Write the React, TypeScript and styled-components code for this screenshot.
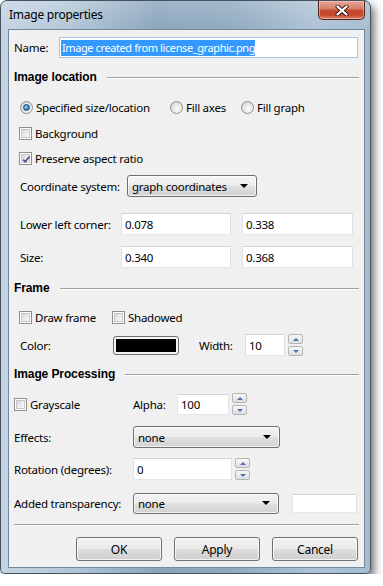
import React from "react";
import styled, { createGlobalStyle } from "styled-components";

const GlobalStyle = createGlobalStyle`
  html, body {
    margin: 0;
    padding: 0;
    background: #ffffff;
  }
  body {
    font-family: "Noto Sans", "Open Sans", sans-serif;
    font-size: 11.5px;
    letter-spacing: -0.25px;
    color: #000;
  }
`;

const Window = styled.div`
  width: 371px;
  height: 574px;
  box-sizing: border-box;
  border: 1px solid #45525e;
  border-radius: 7px 7px 5px 5px;
  padding: 0 5px 5px 7px;
  display: flex;
  flex-direction: column;
  background:
    linear-gradient(180deg, rgba(255, 255, 255, 0.2) 0px, rgba(255, 255, 255, 0) 30px),
    linear-gradient(90deg, #c3d4e3 0%, #b3c7d8 18%, #8aa5bc 42%, #8ea9bf 62%, #adc2d4 85%, #a5bcd0 100%);
  box-shadow: 3px 5px 10px rgba(0, 0, 0, 0.6);
`;

const TitleBar = styled.div`
  height: 28px;
  display: flex;
  align-items: flex-start;
  justify-content: space-between;
`;

const Title = styled.div`
  font-size: 12px;
  line-height: 28px;
  padding-left: 1px;
  color: #000;
`;

const CloseButton = styled.div`
  width: 47px;
  height: 19px;
  box-sizing: border-box;
  border: 1px solid #51241b;
  border-top: none;
  border-radius: 0 0 5px 5px;
  background: linear-gradient(180deg, #e6a497 0%, #d8826f 40%, #c2452c 55%, #c64b31 80%, #de8a6d 100%);
  box-shadow: inset 0 0 0 1px rgba(255, 220, 210, 0.45);
  display: flex;
  align-items: center;
  justify-content: center;
`;

const Client = styled.div`
  flex: 1;
  border: 1px solid #75889a;
  background: #f0f0f0;
  padding: 7px 5px 5px 5px;
  display: flex;
  flex-direction: column;
`;

const Row = styled.div<{ $mt?: number; $h: number; $indent?: number }>`
  display: flex;
  align-items: center;
  height: ${(p) => p.$h}px;
  margin-top: ${(p) => p.$mt ?? 0}px;
  padding-left: ${(p) => p.$indent ?? 0}px;
  flex-shrink: 0;
`;

const Label = styled.span<{ $w?: number }>`
  width: ${(p) => (p.$w ? `${p.$w}px` : "auto")};
  flex-shrink: 0;
  white-space: nowrap;
`;

const SectionTitle = styled.span`
  font-family: "Liberation Sans", Arial, sans-serif;
  font-weight: bold;
  font-size: 12px;
  letter-spacing: -0.1px;
  white-space: nowrap;
`;

const SectionLine = styled.div`
  flex: 1;
  margin-left: 10px;
  margin-top: 2px;
  height: 0;
  border-top: 1px solid #a0a0a0;
  border-bottom: 1px solid #ffffff;
`;

const Separator = styled.div<{ $mt: number }>`
  margin-top: ${(p) => p.$mt}px;
  height: 0;
  border-top: 1px solid #a0a0a0;
  border-bottom: 1px solid #ffffff;
  flex-shrink: 0;
`;

const TextField = styled.div<{ $w: number; $h?: number; $focus?: boolean }>`
  width: ${(p) => p.$w}px;
  height: ${(p) => p.$h ?? 22}px;
  box-sizing: border-box;
  background: #fff;
  border: 1px solid;
  border-color: ${(p) => (p.$focus ? "#a7c6e6" : "#d2d4d8 #dfe2e6 #e3e6ea #dfe2e6")};
  padding-left: ${(p) => (p.$focus ? 1 : 3)}px;
  display: flex;
  align-items: center;
  flex-shrink: 0;
  white-space: nowrap;
  overflow: hidden;
`;

const Selected = styled.span`
  background: #3399ff;
  color: #fff;
  font-size: 11px;
  line-height: 16px;
  letter-spacing: -0.4px;
  padding: 0 0 0 1px;
`;

const ComboBox = styled.div<{ $w: number; $h?: number }>`
  width: ${(p) => p.$w}px;
  height: ${(p) => p.$h ?? 22}px;
  box-sizing: border-box;
  border: 1px solid #707070;
  border-radius: 3px;
  background: linear-gradient(180deg, #f4f4f4 0%, #ececec 48%, #dfdfdf 52%, #d2d2d2 100%);
  box-shadow: inset 0 0 0 1px rgba(255, 255, 255, 0.7);
  display: flex;
  align-items: center;
  justify-content: space-between;
  padding: 0 8px 0 4px;
  flex-shrink: 0;
`;

const Arrow = styled.span`
  width: 0;
  height: 0;
  border-left: 4px solid transparent;
  border-right: 4px solid transparent;
  border-top: 4px solid #000;
`;

const OptionItem = styled.div<{ $w?: number }>`
  display: flex;
  align-items: center;
  gap: 3px;
  width: ${(p) => (p.$w ? `${p.$w}px` : "auto")};
  flex-shrink: 0;
  white-space: nowrap;
`;

const CheckBox = styled.span`
  width: 13px;
  height: 13px;
  box-sizing: border-box;
  border: 1px solid #8e8f8f;
  background: #fff;
  padding: 1px;
  display: flex;
  flex-shrink: 0;
  position: relative;
  &::before {
    content: "";
    flex: 1;
    border: 1px solid #c6c6c6;
    background: linear-gradient(135deg, #d6d6d6 0%, #eeeeee 60%, #fbfbfb 100%);
  }
  svg {
    position: absolute;
    left: 1px;
    top: 1px;
  }
`;

const Radio = styled.span<{ $on?: boolean }>`
  width: 13px;
  height: 13px;
  box-sizing: border-box;
  border-radius: 50%;
  border: 1px solid #8e8f8f;
  background: radial-gradient(circle at 60% 65%, #fdfdfd 0%, #e4e4e4 55%, #c9c9c9 100%);
  display: flex;
  align-items: center;
  justify-content: center;
  flex-shrink: 0;
  &::after {
    content: "";
    display: ${(p) => (p.$on ? "block" : "none")};
    width: 5px;
    height: 5px;
    border-radius: 50%;
    border: 1px solid #1b4b77;
    background: radial-gradient(circle at 40% 40%, #9ad8fb 0%, #2f7fc0 60%, #17456f 100%);
  }
`;

const Spin = styled.div`
  display: flex;
  flex-direction: column;
  gap: 2px;
  margin-left: 3px;
  flex-shrink: 0;
`;

const SpinButton = styled.div<{ $down?: boolean }>`
  width: 15px;
  height: 10px;
  box-sizing: border-box;
  border: 1px solid #b5b5b5;
  border-radius: 2px;
  background: linear-gradient(180deg, #f7f7f7 0%, #ececec 50%, #dcdcdc 100%);
  display: flex;
  align-items: center;
  justify-content: center;
  &::after {
    content: "";
    width: 0;
    height: 0;
    border-left: 3.5px solid transparent;
    border-right: 3.5px solid transparent;
    ${(p) => (p.$down ? "border-top: 3px solid #4f6fae;" : "border-bottom: 3px solid #4f6fae;")}
  }
`;

const Swatch = styled.div`
  width: 66px;
  height: 19px;
  box-sizing: border-box;
  border: 1px solid #6f6f6f;
  border-radius: 3px;
  padding: 2px;
  background: #f4f4f4;
  display: flex;
  flex-shrink: 0;
  &::before {
    content: "";
    flex: 1;
    background: #000;
  }
`;

const ButtonBar = styled.div<{ $mt: number }>`
  margin-top: ${(p) => p.$mt}px;
  display: flex;
  justify-content: flex-end;
  gap: 12px;
  padding-right: 1px;
  flex-shrink: 0;
`;

const DialogButton = styled.div`
  width: 86px;
  height: 24px;
  box-sizing: border-box;
  border: 1px solid #707070;
  border-radius: 3px;
  background: linear-gradient(180deg, #f2f2f2 0%, #ebebeb 48%, #dddddd 52%, #cfcfcf 100%);
  box-shadow: inset 0 0 0 1px rgba(255, 255, 255, 0.75);
  display: flex;
  align-items: center;
  justify-content: center;
  font-size: 12px;
`;

const CheckMark = () => (
  <svg width="11" height="11" viewBox="0 0 11 11">
    <path d="M2.2 5.6 L4.3 7.8 L8.6 2.6" fill="none" stroke="#3c4f8c" strokeWidth="1.6" />
  </svg>
);

const Check: React.FC<{ checked?: boolean }> = ({ checked }) => (
  <CheckBox>{checked && <CheckMark />}</CheckBox>
);

const CloseGlyph = () => (
  <svg width="14" height="11" viewBox="0 0 14 11">
    <path d="M2.5 1.5 L11.5 9.5 M11.5 1.5 L2.5 9.5" stroke="#3a1a14" strokeWidth="4" strokeLinecap="round" />
    <path d="M2.5 1.5 L11.5 9.5 M11.5 1.5 L2.5 9.5" stroke="#ffffff" strokeWidth="2.2" strokeLinecap="round" />
  </svg>
);

const Spinner = () => (
  <Spin>
    <SpinButton />
    <SpinButton $down />
  </Spin>
);

export default function App() {
  return (
    <>
      <GlobalStyle />
      <Window>
        <TitleBar>
          <Title>Image properties</Title>
          <CloseButton>
            <CloseGlyph />
          </CloseButton>
        </TitleBar>
        <Client>
          <Row $h={21}>
            <Label $w={45}>Name:</Label>
            <TextField $w={299} $h={21} $focus>
              <Selected>Image created from license_graphic.png</Selected>
            </TextField>
          </Row>

          <Row $h={16} $mt={11}>
            <SectionTitle>Image location</SectionTitle>
            <SectionLine />
          </Row>
          <Row $h={16} $mt={14} $indent={6}>
            <OptionItem $w={150}>
              <Radio $on />
              <span>Specified size/location</span>
            </OptionItem>
            <OptionItem $w={71}>
              <Radio />
              <span>Fill axes</span>
            </OptionItem>
            <OptionItem>
              <Radio />
              <span>Fill graph</span>
            </OptionItem>
          </Row>
          <Row $h={16} $mt={10} $indent={5}>
            <OptionItem>
              <Check />
              <span>Background</span>
            </OptionItem>
          </Row>
          <Row $h={16} $mt={9} $indent={5}>
            <OptionItem>
              <Check checked />
              <span>Preserve aspect ratio</span>
            </OptionItem>
          </Row>
          <Row $h={22} $mt={9} $indent={6}>
            <Label $w={107}>Coordinate system:</Label>
            <ComboBox $w={130}>
              <span>graph coordinates</span>
              <Arrow />
            </ComboBox>
          </Row>
          <Row $h={22} $mt={16} $indent={6}>
            <Label $w={101}>Lower left corner:</Label>
            <TextField $w={110}>0.078</TextField>
            <TextField $w={111} style={{ marginLeft: 11 }}>0.338</TextField>
          </Row>
          <Row $h={22} $mt={11} $indent={6}>
            <Label $w={101}>Size:</Label>
            <TextField $w={110}>0.340</TextField>
            <TextField $w={111} style={{ marginLeft: 11 }}>0.368</TextField>
          </Row>

          <Row $h={16} $mt={12}>
            <SectionTitle>Frame</SectionTitle>
            <SectionLine />
          </Row>
          <Row $h={16} $mt={13} $indent={5}>
            <OptionItem $w={93}>
              <Check />
              <span>Draw frame</span>
            </OptionItem>
            <OptionItem>
              <Check />
              <span>Shadowed</span>
            </OptionItem>
          </Row>
          <Row $h={22} $mt={9} $indent={6}>
            <Label $w={93}>Color:</Label>
            <Swatch />
            <Label $w={46} style={{ marginLeft: 20 }}>Width:</Label>
            <TextField $w={40}>10</TextField>
            <Spinner />
          </Row>

          <Row $h={16} $mt={10}>
            <SectionTitle>Image Processing</SectionTitle>
            <SectionLine />
          </Row>
          <Row $h={22} $mt={11}>
            <OptionItem $w={119}>
              <Check />
              <span>Grayscale</span>
            </OptionItem>
            <Label $w={44}>Alpha:</Label>
            <TextField $w={52} $h={21}>100</TextField>
            <Spinner />
          </Row>
          <Row $h={22} $mt={11}>
            <Label $w={119}>Effects:</Label>
            <ComboBox $w={147}>
              <span>none</span>
              <Arrow />
            </ComboBox>
          </Row>
          <Row $h={22} $mt={10}>
            <Label $w={119}>Rotation (degrees):</Label>
            <TextField $w={99}>0</TextField>
            <Spinner />
          </Row>
          <Row $h={22} $mt={12}>
            <Label $w={119}>Added transparency:</Label>
            <ComboBox $w={146} $h={21}>
              <span>none</span>
              <Arrow />
            </ComboBox>
            <TextField $w={65} $h={19} style={{ marginLeft: 13 }} />
          </Row>

          <Separator $mt={10} />
          <ButtonBar $mt={11}>
            <DialogButton>OK</DialogButton>
            <DialogButton>Apply</DialogButton>
            <DialogButton>Cancel</DialogButton>
          </ButtonBar>
        </Client>
      </Window>
    </>
  );
}
